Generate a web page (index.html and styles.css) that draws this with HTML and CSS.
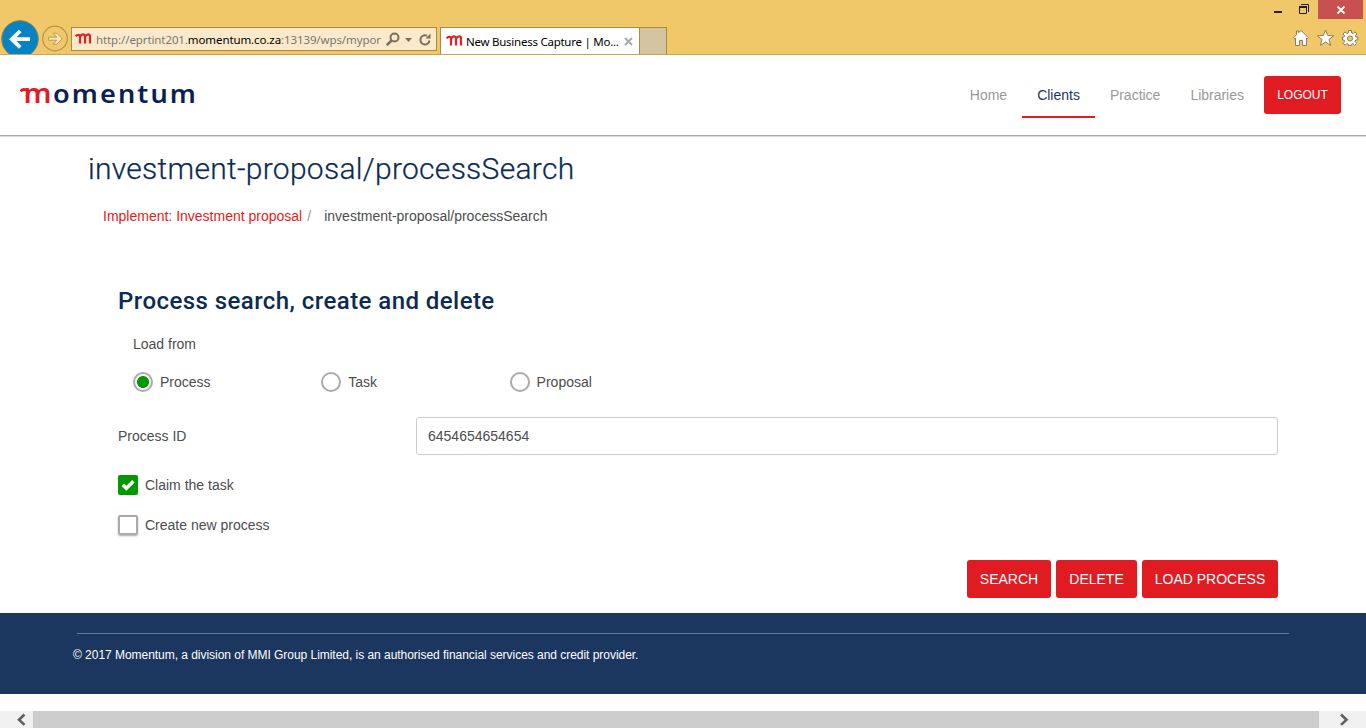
FILE: index.html
```html
<!DOCTYPE html>
<html lang="en">
<head>
<meta charset="utf-8">
<title>New Business Capture | Momentum</title>
<link rel="stylesheet" href="styles.css">
</head>
<body>
<div class="window">
  <header class="chrome">
    <div class="nav-buttons">
      <svg class="back" width="40" height="34" viewBox="0 0 40 34"><circle cx="20" cy="19" r="18.3" fill="#0683c4" stroke="#8f8244" stroke-width="1"/><path d="M30 19.200H12M20.200 11l-8.400 8.200 8.400 8.200" fill="none" stroke="#fff" stroke-width="3.800"/></svg>
      <svg class="forward" width="28" height="34" viewBox="0 0 28 34"><circle cx="14" cy="18.500" r="12.300" fill="none" stroke="#b5944c" stroke-width="1.200"/><path d="M7.500 17.200h8.300l-3.600-4h3.600l5.500 5.500-5.500 5.500h-3.600l3.600-4H7.500z" fill="#f9e7bd" stroke="#b5944c" stroke-width=".9"/></svg>
    </div>
    <div class="address">
      <svg class="favicon" width="17" height="12" viewBox="0 0 17 12"><path d="M.5 3.200Q3 .8 5 2.500V10.500M5 3.500Q8-.1 10 2.500V10.500M10 3.500q3-3.500 5-1V10.500" fill="none" stroke="#df2127" stroke-width="2.200"/></svg>
      <span class="url">http://eprtint201.<b>momentum.co.za</b>:13139/wps/mypor</span>
      <svg class="address-icons" width="50" height="20" viewBox="0 0 50 20"><g fill="none" stroke="#77705c" stroke-width="2"><circle cx="8.500" cy="8.500" r="4"/><path d="M5.500 11.500.8 16.200" stroke-width="2.600"/><path d="M41 6.800A4.600 4.600 0 1 0 43.500 11.500"/></g><path d="M19 9h7l-3.500 4zM39.500 9.500h5V4.500z" fill="#77705c"/></svg>
    </div>
    <div class="tab">
      <svg class="favicon" width="17" height="12" viewBox="0 0 17 12"><path d="M.5 3.200Q3 .8 5 2.500V10.500M5 3.500Q8-.1 10 2.500V10.500M10 3.500q3-3.500 5-1V10.500" fill="none" stroke="#df2127" stroke-width="2.200"/></svg>
      <span class="tab-title">New Business Capture | Mo...</span>
      <svg class="tab-close" width="9" height="9" viewBox="0 0 9 9"><path d="m1 1 7 7m0-7-7 7" stroke="#aaa" stroke-width="2"/></svg>
    </div>
    <div class="new-tab"></div>
    <div class="window-side">
      <div class="controls">
        <svg width="45" height="19" viewBox="0 0 45 19"><path d="M1 11h8v2H1z" fill="#222"/><g fill="none" stroke="#222"><path d="M26.500 6.500h7v7h-7z"/><path d="M26 7h8" stroke-width="2"/><path d="M28 4.500h7.500V12"/></g></svg>
        <div class="close"><svg width="10" height="10" viewBox="0 0 10 10"><path d="m1.500 1.500 7 7m0-7-7 7" stroke="#fff" stroke-width="1.800"/></svg></div>
      </div>
      <svg class="tools" width="66" height="18" viewBox="0 0 66 18"><g fill="#fff" stroke="#8f7d52"><path d="m8 1.500 7.500 7.200-1.200 1.200-.8-.8v7.400H9.500v-5h-3v5h-4V9.100l-.8.8L.6 8.700l2.900-3V2h2v1.800z"/><path d="m32.500 1 2.200 5.500 6 .3-4.700 3.700 1.600 5.900-5.100-3.400-5.100 3.400 1.600-5.900-4.700-3.700 6-.3z"/><path d="M55.500 1.500h3v2.400l1.700.7 1.700-1.800L64 5l-1.800 1.700.7 1.300h2v3h-2.200l-.7 1.500 1.700 1.800-2 2-1.800-1.700-1.600.7v1.200h-3v-1.200l-1.500-.7-1.700 1.700-2-2 1.600-1.800-.7-1.500H49.500V8H51l.7-1.300L50 5l2-2.200 1.700 1.800 1.700-.7z"/><circle cx="57" cy="9.500" r="2.600" fill="#efc766"/></g></svg>
    </div>
  </header>

  <div class="site-header">
    <svg class="logo" width="190" height="46" viewBox="0 0 190 46" role="img" aria-label="momentum"><path d="M.6 19.500Q3 15.800 8 18.800" fill="none" stroke="#e31c23" stroke-width="2.800"/><text class="logo-m" x="3.500" y="31" textLength="28" lengthAdjust="spacingAndGlyphs">m</text><text class="logo-rest" x="33" y="31" textLength="145" lengthAdjust="spacingAndGlyphs">omentum</text></svg>
    <nav class="menu">
      <a>Home</a><a class="active">Clients</a><a>Practice</a><a>Libraries</a>
    </nav>
    <button class="btn logout">LOGOUT</button>
  </div>

  <main class="content">
    <h1>investment-proposal/processSearch</h1>
    <div class="crumbs"><a>Implement: Investment proposal</a><i>/</i><span>investment-proposal/processSearch</span></div>
    <section class="form">
      <h2>Process search, create and delete</h2>
      <div class="load-label">Load from</div>
      <div class="radios">
        <label><span class="radio on"></span>Process</label>
        <label><span class="radio"></span>Task</label>
        <label><span class="radio"></span>Proposal</label>
      </div>
      <div class="field"><label>Process ID</label><div class="input">6454654654654</div></div>
      <label class="check-row"><span class="check checked"><svg width="20" height="20" viewBox="0 0 20 20"><path d="m4.800 9.700 3.600 3.600 7-7" fill="none" stroke="#fff" stroke-width="3.600"/></svg></span>Claim the task</label>
      <label class="check-row"><span class="check"></span>Create new process</label>
      <div class="actions"><button class="btn search">SEARCH</button><button class="btn delete">DELETE</button><button class="btn load">LOAD PROCESS</button></div>
    </section>
  </main>

  <footer class="footer">
    <div class="rule"></div>
    <p>© 2017 Momentum, a division of MMI Group Limited, is an authorised financial services and credit provider.</p>
  </footer>

  <div class="scrollbar">
    <svg width="33" height="17" viewBox="0 0 33 17"><path d="M24.500 3.500 19 8.700l5.500 5.200" fill="none" stroke="#606060" stroke-width="2.600"/></svg>
    <div class="thumb"></div>
    <svg width="47" height="17" viewBox="0 0 47 17"><path d="m22 3.500 5.500 5.200L22 13.900" fill="none" stroke="#606060" stroke-width="2.600"/></svg>
  </div>
</div>
</body>
</html>
```
FILE: styles.css
```css
* { box-sizing: border-box; }
body { margin: 0; background: #fff; color: #4d4d4f; font: 14px/20px "Liberation Sans", Arial, sans-serif; }
h1, h2, p { margin: 0; }
svg { display: block; flex: none; }
.window { width: 1366px; height: 728px; display: flex; flex-direction: column; overflow: hidden; }

.chrome { height: 55px; flex: none; display: flex; align-items: flex-end; background: #f0c869; border-bottom: 1px solid #c9a553; }
.nav-buttons { display: flex; width: 71px; }
.forward { margin-left: 1px; }
.address { width: 366px; height: 24px; margin-bottom: 3px; border: 1px solid #a88b4c; background: #faeaca; display: flex; align-items: center; padding-left: 3px; font: 11.5px/20px "Noto Sans", sans-serif; color: #777; }
.favicon { margin-right: 4px; }
.url { width: 288px; white-space: nowrap; letter-spacing: -.1px; padding-top: 1px; }
.url b { font-weight: 400; color: #000; }
.address-icons { margin-left: 2px; }
.tab { width: 200px; height: 27px; margin-left: 3px; border: 1px solid #a88b4c; border-bottom: 0; background: #fff; display: flex; align-items: center; padding-left: 5px; color: #000; font: 11.5px/20px "Noto Sans", sans-serif; }
.tab .favicon { margin-right: 3px; }
.tab-title { width: 153px; margin-right: 5px; white-space: nowrap; padding-top: 2px; letter-spacing: -.25px; }
.new-tab { width: 27px; height: 27px; background: #d5c59f; border: 1px solid #a88b4c; border-width: 1px 1px 0 0; }
.window-side { margin-left: auto; height: 54px; display: flex; flex-direction: column; align-items: flex-end; }
.controls { display: flex; }
.close { width: 45px; height: 19px; margin-right: 3px; background: #c75050; display: flex; align-items: center; justify-content: center; }
.tools { margin: 10px 7px 0 0; }

.site-header { height: 81px; flex: none; display: flex; align-items: flex-start; border-bottom: 1px solid #aaa; box-shadow: 0 1px 1px #ddd; padding: 0 25px 0 20px; }
.logo { margin-top: 17px; }
.logo-m { font: 600 27px "Noto Sans", sans-serif; fill: #e31c23; }
.logo-rest { font: 600 26px "Noto Sans", sans-serif; fill: #0c1f54; letter-spacing: 2px; }
.menu { margin-left: auto; display: flex; margin-right: 5px; }
.menu a { height: 63px; padding: 30px 15px 0; color: #999; font-size: 14px; letter-spacing: -.01px; }
.menu .active { color: #1b365d; border-bottom: 2px solid #e31b23; }
.btn { border: 0; border-radius: 3px; height: 38px; padding: 0; background: #e11b22; color: #fff; font: 14px "Liberation Sans", Arial, sans-serif; }
.logout { width: 77px; margin-top: 21px; font-size: 12px; }

.content { height: 477px; flex: none; padding: 13px 88px 0; color: #4d4d4f; }
h1 { height: 40px; font: 300 30px/40px Roboto, sans-serif; color: #0c2b52; letter-spacing: .28px; white-space: nowrap; -webkit-text-stroke: .25px #0c2b52; }
.crumbs { margin-top: 17px; padding-left: 15px; display: flex; }
.crumbs a { color: #e11b22; }
.crumbs i { font-style: normal; color: #999; width: 22px; padding-left: 5px; }
.form { margin: 59px 0 0 30px; width: 1160px; }
h2 { height: 32px; font: 500 24px/32px Roboto, sans-serif; color: #0c2b52; letter-spacing: .44px; white-space: nowrap; }
.load-label { margin: 17px 0 0 15px; }
.radios { display: flex; margin: 18px 0 0 15px; }
.radios label { width: 188.300px; display: flex; gap: 7px; align-items: center; }
.radio { width: 20px; height: 20px; border: 2px solid #aaa; border-radius: 50%; }
.on { background: radial-gradient(circle, #090 5.600px, #fff 6.300px); }
.field { margin-top: 25px; height: 38px; display: flex; align-items: center; }
.field label { width: 298px; }
.input { flex: 1; height: 38px; border: 1px solid #ccc; border-radius: 3px; padding: 8px 11px; }
.check-row { display: flex; align-items: center; gap: 7px; margin-top: 20px; height: 20px; }
.check { width: 20px; height: 20px; border: 2px solid #aaa; border-radius: 2px; box-shadow: 0 1px 2px #aaa; }
.checked { border: 0; background: #090; box-shadow: none; }
.actions { margin-top: 25px; display: flex; justify-content: flex-end; gap: 5px; }
.search { width: 84px; }
.delete { width: 81px; }
.load { width: 136px; }

.footer { height: 81px; flex: none; background: #1b365f; padding: 20px 77px 0 73px; color: #fff; }
.rule { height: 1px; margin-left: 4px; background: #637796; }
.footer p { margin-top: 11px; font-size: 12px; white-space: nowrap; letter-spacing: -.035px; }
.scrollbar { height: 17px; margin-top: auto; display: flex; background: #f0f0f0; }
.thumb { flex: 1; background: #cdcdcd; }
```
